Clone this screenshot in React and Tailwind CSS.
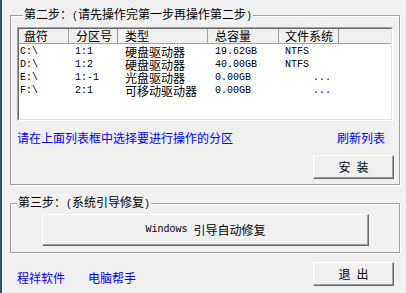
const cjk = "font-['Noto_Sans_CJK_SC',sans-serif]";
const mono = "font-['Liberation_Mono','Noto_Sans_CJK_SC',monospace]";

const columns = [
  { title: "盘符", w: "w-[50px]", hp: "pl-[5px]", dp: "pl-[1px]" },
  { title: "分区号", w: "w-[49px]", hp: "pl-[7px]", dp: "pl-[6px]" },
  { title: "类型", w: "w-[90px]", hp: "pl-[7px]", dp: "pl-[7px]" },
  { title: "总容量", w: "w-[71px]", hp: "pl-[7px]", dp: "pl-[7px]" },
  { title: "文件系统", w: "w-[60px]", hp: "pl-[6px]", dp: "pl-[6px]" },
];

const drives = [
  ["C:\\", "1:1", "硬盘驱动器", "19.62GB", "NTFS"],
  ["D:\\", "1:2", "硬盘驱动器", "40.00GB", "NTFS"],
  ["E:\\", "1:-1", "光盘驱动器", "0.00GB", "..."],
  ["F:\\", "2:1", "可移动驱动器", "0.00GB", "..."],
];

const raised =
  "border border-t-white border-l-white border-r-[#696969] border-b-[#696969] shadow-[inset_-1px_-1px_0_#a0a0a0] bg-[#f0f0f0] text-black";

const Paren = ({ children }) => (
  <span className={`${mono} text-[10px]`}>{children}</span>
);

const App = () => {
  return (
    <div
      className={`w-[406px] h-[293px] overflow-hidden bg-[#f0f0f0] border-l-2 border-[#34506e] pl-[8px] pt-[7px] text-[12px] leading-[14px] text-black ${cjk}`}
    >
      {/* step two */}
      <fieldset className="w-[390px] border border-[#a0a0a0] shadow-[inset_1px_1px_0_#fff,1px_1px_0_#fff] px-[6px] pt-[3px] pb-[5px]">
        <legend className="ml-[6px] px-[1px] bg-[#f0f0f0] leading-[14px]">
          第二步：<Paren>(</Paren>请先操作完第一步再操作第二步<Paren>)</Paren>
        </legend>

        <div className="h-[94px] border border-t-[#a0a0a0] border-l-[#a0a0a0] border-r-white border-b-white">
          <div className="h-full border border-t-[#696969] border-l-[#696969] border-r-[#e3e3e3] border-b-[#e3e3e3] bg-white">
            <div className="flex h-[15px] border-b border-[#a0a0a0] bg-[#f0f0f0]">
              {columns.map((c) => (
                <div
                  key={c.title}
                  className={`${c.w} ${c.hp} shrink-0 border-r border-[#a0a0a0] leading-[14px]`}
                >
                  {c.title}
                </div>
              ))}
              <div className="flex-1" />
            </div>

            <div className="pt-[1px]">
              {drives.map((row) => (
                <div key={row[0]} className="flex h-[13px] leading-[13px]">
                  {row.map((cell, i) => (
                    <div
                      key={i}
                      className={`${columns[i].w} ${
                        cell === "..." ? "pl-[34px]" : columns[i].dp
                      } shrink-0 whitespace-nowrap ${
                        i === 2 ? "text-[12px]" : `${mono} text-[10px]`
                      }`}
                    >
                      {cell}
                    </div>
                  ))}
                </div>
              ))}
            </div>
          </div>
        </div>

        <div className="mt-[10px] flex justify-between pr-[8px] text-[#0000ff]">
          <span>请在上面列表框中选择要进行操作的分区</span>
          <span>刷新列表</span>
        </div>

        <div className="mt-[10px] flex justify-end -mr-[1px]">
          <button
            className={`${raised} flex h-[24px] w-[81px] items-center justify-center gap-[6px]`}
          >
            <span>安</span>
            <span>装</span>
          </button>
        </div>
      </fieldset>

      {/* step three */}
      <fieldset className="mt-[10px] w-[390px] border border-[#a0a0a0] shadow-[inset_1px_1px_0_#fff,1px_1px_0_#fff] pl-[31px] pt-[2px] pb-[6px]">
        <legend className="-ml-[25px] px-[1px] bg-[#f0f0f0] leading-[14px]">
          第三步：<Paren>(</Paren>系统引导修复<Paren>)</Paren>
        </legend>

        <button
          className={`${raised} flex h-[32px] w-[327px] items-center justify-center`}
        >
          <span className={`${mono} text-[10px]`}>Windows&nbsp;</span>
          <span>引导自动修复</span>
        </button>
      </fieldset>

      <div className="mt-[9px] flex w-[384px] items-start justify-between">
        <div className="mt-[9px] flex gap-[23px] pl-[7px] text-[#0000ff]">
          <span>程祥软件</span>
          <span>电脑帮手</span>
        </div>
        <button
          className={`${raised} flex h-[24px] w-[81px] items-center justify-center gap-[6px]`}
        >
          <span>退</span>
          <span>出</span>
        </button>
      </div>
    </div>
  );
};

export default App;
